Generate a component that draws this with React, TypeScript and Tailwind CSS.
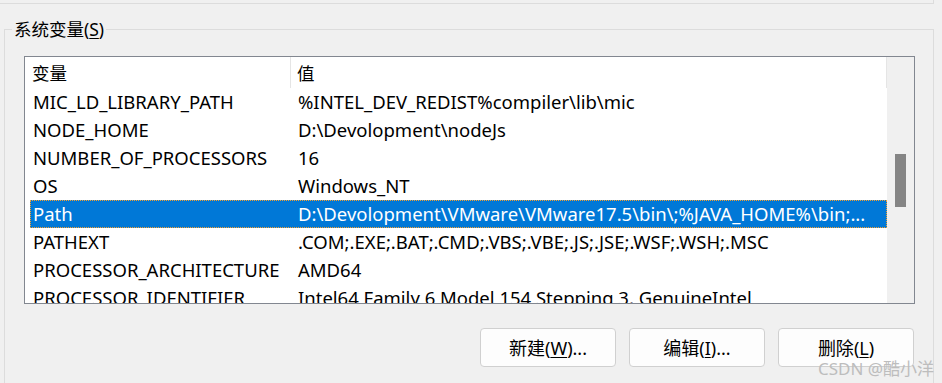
const rows = [
  { name: "MIC_LD_LIBRARY_PATH", value: "%INTEL_DEV_REDIST%compiler\\lib\\mic" },
  { name: "NODE_HOME", value: "D:\\Devolopment\\nodeJs" },
  { name: "NUMBER_OF_PROCESSORS", value: "16" },
  { name: "OS", value: "Windows_NT" },
  {
    name: "Path",
    value: "D:\\Devolopment\\VMware\\VMware17.5\\bin\\;%JAVA_HOME%\\bin;...",
    selected: true,
  },
  { name: "PATHEXT", value: ".COM;.EXE;.BAT;.CMD;.VBS;.VBE;.JS;.JSE;.WSF;.WSH;.MSC" },
  { name: "PROCESSOR_ARCHITECTURE", value: "AMD64" },
  { name: "PROCESSOR_IDENTIFIER", value: "Intel64 Family 6 Model 154 Stepping 3, GenuineIntel" },
];

const font = "font-['Noto_Sans','Noto_Sans_CJK_SC',sans-serif]";

function Btn({ label, hot, rest }: { label: string; hot: string; rest: string }) {
  return (
    <button className="w-[136px] h-[39px] bg-[#fdfdfd] border border-[#d0d0d0] rounded-[4px] text-[18px] leading-[22px] text-black flex items-center justify-center">
      {label}(<span className="underline underline-offset-2">{hot}</span>){rest}
    </button>
  );
}

export default function App() {
  return (
    <div className={`relative w-[942px] h-[383px] overflow-hidden bg-[#f0f0f0] ${font}`}>
      {/* bottom edge of the group above */}
      <div className="w-[934px] h-[4px] border-b border-r border-[#dcdcdc]" />

      <div className="relative ml-[4px] mt-[25px] w-[930px] h-[400px] border-l border-t border-r border-[#dcdcdc]">
        <div className="absolute left-[7px] top-[-11px] px-[2px] bg-[#f0f0f0] text-[17.5px] leading-[20px] text-black">
          系统变量(<span className="underline underline-offset-2">S</span>)
        </div>

        <div className="ml-[19px] mt-[26px] w-[891px] h-[248px] border border-[#828790] bg-white flex overflow-hidden">
          <div className="w-[862px] flex flex-col">
            <div className="h-[31px] shrink-0 flex items-stretch text-[17.5px] text-black">
              <div className="w-[266px] pl-[7px] pt-[2px] flex items-center border-r border-[#e5e5e5]">变量</div>
              <div className="flex-1 pl-[6px] pt-[2px] flex items-center border-r border-[#e5e5e5]">值</div>
            </div>
            {rows.map((r) => (
              <div
                key={r.name}
                className={`ml-[5px] h-[28px] shrink-0 flex items-center text-[18.5px] leading-[24px] whitespace-nowrap ${
                  r.selected
                    ? "bg-[#0078d7] text-white outline-1 outline-dotted outline-[#f5a030] -outline-offset-1"
                    : "text-black"
                }`}
              >
                <div className="w-[265px] pl-[3px]">{r.name}</div>
                <div className="pl-[3px]">{r.value}</div>
              </div>
            ))}
          </div>
          <div className="w-[27px] bg-[#f0f0f0] pt-[97px]">
            <div className="ml-[8px] w-[11px] h-[53px] bg-[#858585]" />
          </div>
        </div>

        <div className="ml-[19px] mt-[24px] w-[891px] flex justify-end gap-[13px] pr-[1px]">
          <Btn label="新建" hot="W" rest="..." />
          <Btn label="编辑" hot="I" rest="..." />
          <Btn label="删除" hot="L" rest="" />
        </div>
      </div>

      <div className="absolute left-[818px] top-[360px] text-[17px] leading-[18px] text-[#bdbdbd] whitespace-nowrap">
        CSDN @酷小洋
      </div>
    </div>
  );
}
